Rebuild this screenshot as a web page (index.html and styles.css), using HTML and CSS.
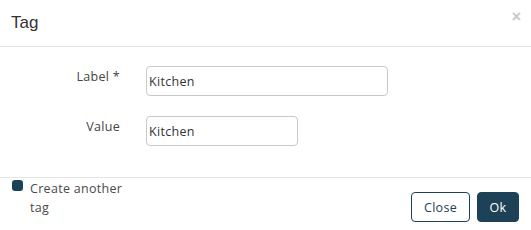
FILE: index.html
```html
<!DOCTYPE html>
<html lang="en">

<head>
    <meta charset="UTF-8">
    <meta name="viewport" content="width=device-width, initial-scale=1.0">
    <title>Tag</title>
    <link rel="stylesheet" href="styles.css">
</head>

<body>
    <div class="modal">
        <div class="modal-header">
            <h4 class="modal-title">Tag</h4>
            <button class="close" type="button">&times;</button>
        </div>

        <div class="modal-body">
            <div class="form-row">
                <label class="form-label" for="tagLabel">Label *</label>
                <input id="tagLabel" class="form-input wide" type="text" value="Kitchen">
            </div>
            <div class="form-row">
                <label class="form-label" for="tagValue">Value</label>
                <input id="tagValue" class="form-input" type="text" value="Kitchen">
            </div>
        </div>

        <div class="modal-footer">
            <label class="another">
                <span class="check"></span>
                <span>Create another tag</span>
            </label>
            <div class="buttons">
                <button class="btn btn-outline" type="button">Close</button>
                <button class="btn btn-primary" type="button">Ok</button>
            </div>
        </div>
    </div>
</body>

</html>
```

FILE: styles.css
```css
body {
    margin: 0;
    background: white;
    font-family: 'Open Sans', sans-serif;
    letter-spacing: 0.3px;
    color: #444;
}

.modal {
    width: 531px;
    height: 230px;
    background: white;
}

.modal-header {
    height: 46px;
    display: flex;
    align-items: center;
    padding: 0 10px 0 11px;
    border-bottom: 1px solid #e5e5e5;
}

.modal-title {
    margin: 0;
    font-family: 'Liberation Sans', sans-serif;
    font-weight: normal;
    font-size: 17px;
    letter-spacing: 0;
    color: #333;
}

.close {
    margin-left: auto;
    margin-top: -13px;
    padding: 0;
    border: none;
    background: none;
    color: #c8c8c8;
    font-size: 16px;
    font-weight: bold;
    line-height: 1;
    cursor: pointer;
}

.modal-body {
    padding: 19px 0 31px;
    display: flex;
    flex-direction: column;
    gap: 20px;
}

.form-row {
    display: flex;
    align-items: flex-start;
    gap: 26px;
}

.form-label {
    width: 120px;
    text-align: right;
    font-size: 12.5px;
    line-height: 20px;
    padding-top: 1px;
    color: #444;
}

.form-input {
    box-sizing: border-box;
    width: 152px;
    height: 30px;
    padding: 0 2px;
    border: 1px solid #c9c9c9;
    border-radius: 4px;
    font-family: 'Open Sans', sans-serif;
    font-size: 12.5px;
    letter-spacing: 0.3px;
    color: #333;
}

.form-input.wide {
    width: 242px;
}

.modal-footer {
    border-top: 1px solid #e5e5e5;
    display: flex;
    justify-content: space-between;
    padding: 1px 12px 9px 12px;
}

.another {
    display: flex;
    gap: 7px;
    width: 125px;
    font-size: 12.5px;
    line-height: 19px;
    color: #4a4a4a;
}

.check {
    flex: none;
    width: 11px;
    height: 11px;
    margin-top: 1px;
    border-radius: 3px;
    background: #1d4257;
}

.buttons {
    display: flex;
    gap: 7px;
    margin-top: 13px;
}

.btn {
    box-sizing: border-box;
    height: 30px;
    padding: 0 10px;
    border-radius: 4px;
    font-family: 'Open Sans', sans-serif;
    font-size: 12.5px;
    letter-spacing: 0.3px;
    cursor: pointer;
}

.btn-outline {
    width: 59px;
    background: white;
    color: #1d4257;
    border: 1px solid #1d4257;
}

.btn-primary {
    width: 42px;
    background: #1d4257;
    color: white;
    border: 1px solid #1d4257;
}
```
